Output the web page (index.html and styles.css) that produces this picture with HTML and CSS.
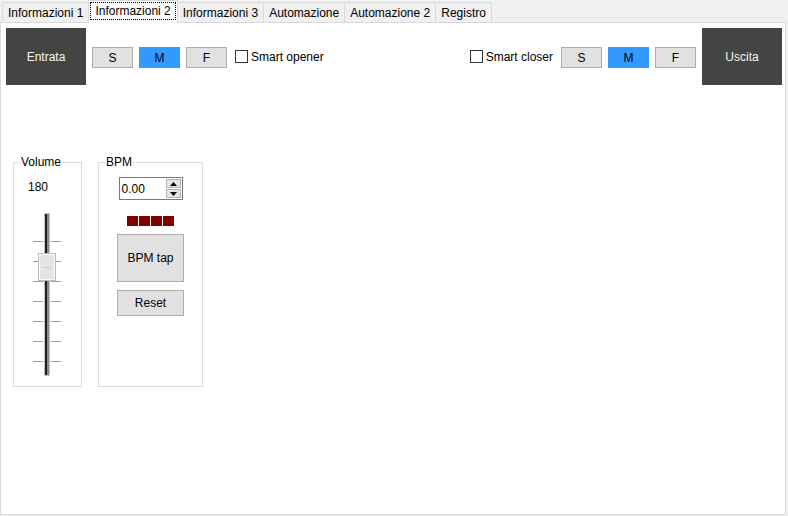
FILE: index.html
```html
<!DOCTYPE html>
<html lang="it">
<head>
<meta charset="utf-8">
<title>Informazioni 2</title>
<link rel="stylesheet" href="styles.css">
</head>
<body>
<div class="window">
  <div class="tabs">
    <div class="tab">Informazioni 1</div>
    <div class="tab selected"><span class="focus">Informazioni 2</span></div>
    <div class="tab">Informazioni 3</div>
    <div class="tab">Automazione</div>
    <div class="tab">Automazione 2</div>
    <div class="tab">Registro</div>
  </div>
  <div class="panel">
    <div class="toprow">
      <div class="bigbtn">Entrata</div>
      <div class="speed left">
        <div class="btn">S</div>
        <div class="btn on">M</div>
        <div class="btn">F</div>
      </div>
      <div class="check"><span class="box"></span>Smart opener</div>
      <div class="rightgroup">
        <div class="check"><span class="box"></span>Smart closer</div>
        <div class="speed right">
          <div class="btn">S</div>
          <div class="btn on">M</div>
          <div class="btn">F</div>
        </div>
        <div class="bigbtn">Uscita</div>
      </div>
    </div>
    <div class="groups">
      <fieldset class="group volume">
        <legend>Volume</legend>
        <div class="value">180</div>
        <svg class="slider" width="30" height="165" viewBox="0 0 30 165">
          <g stroke="#a0a0a0" stroke-width="1">
            <path d="M1 29.5H11M19 29.5H29"/>
            <path d="M1 49.5H11M19 49.5H29"/>
            <path d="M1 69.5H11M19 69.5H29"/>
            <path d="M1 89.5H11M19 89.5H29"/>
            <path d="M1 109.5H11M19 109.5H29"/>
            <path d="M1 129.5H11M19 129.5H29"/>
            <path d="M1 149.5H11M19 149.5H29"/>
          </g>
          <rect x="12.5" y="1.5" width="5" height="162" fill="#f0f0f0" stroke="#c4c4c4"/>
          <rect x="13" y="2" width="2" height="161" fill="#1e1e1e"/>
          <rect x="15" y="2" width="2" height="161" fill="#8a8a8a"/>
          <rect x="6.5" y="41.5" width="17" height="27" fill="#e5e5e5" stroke="#bcbcbc"/>
          <rect x="7.5" y="42.5" width="15" height="25" fill="none" stroke="#fafafa"/>
          <path d="M11 55.5H19" stroke="#c8c8c8"/>
        </svg>
      </fieldset>
      <fieldset class="group bpm">
        <legend>BPM</legend>
        <div class="spin">
          <span>0.00</span>
          <span class="arrows">
            <span class="arrow"><svg width="7" height="4" viewBox="0 0 7 4"><path d="M3.5 0L7 4H0Z" fill="#000"/></svg></span>
            <span class="arrow"><svg width="7" height="4" viewBox="0 0 7 4"><path d="M0 0H7L3.5 4Z" fill="#000"/></svg></span>
          </span>
        </div>
        <div class="leds">
          <span class="led"></span><span class="led"></span><span class="led"></span><span class="led"></span>
        </div>
        <div class="btn tap">BPM tap</div>
        <div class="btn reset">Reset</div>
      </fieldset>
    </div>
  </div>
</div>
</body>
</html>
```
FILE: styles.css
```css
* { box-sizing: border-box; }

body {
  margin: 0;
  font: 12px "Liberation Sans", Arial, sans-serif;
  color: #000;
  background: #f0f0f0;
}

.window {
  width: 788px;
  height: 516px;
  display: flex;
  flex-direction: column;
}

.tabs {
  display: flex;
  align-items: flex-end;
  height: 22px;
  padding-left: 2px;
  position: relative;
  z-index: 1;
}

.tab {
  height: 20px;
  padding: 0 5px;
  border: 1px solid #d9d9d9;
  border-bottom: none;
  margin-right: -1px;
  line-height: 20px;
  background: #f0f0f0;
  white-space: nowrap;
}

.tab.selected {
  height: 23px;
  margin-bottom: -1px;
  background: #fff;
  padding: 1px 1px 0;
  line-height: 16px;
}

.focus {
  display: block;
  border: 1px dotted #000;
  padding: 0 4px;
  line-height: 16px;
}

.panel {
  width: 786px;
  height: 493px;
  background: #fff;
  border: 1px solid #d9d9d9;
  padding: 5px 3px 0 5px;
}

.toprow {
  display: flex;
  align-items: center;
  height: 57px;
}

.bigbtn {
  width: 80px;
  height: 57px;
  background: #444444;
  color: #f4f4f4;
  display: flex;
  align-items: center;
  justify-content: center;
}

.speed {
  display: flex;
  gap: 6px;
  margin-top: 2px;
}

.speed.left { margin-left: 6px; margin-right: 8px; }
.speed.right { margin-left: 8px; margin-right: 6px; }

.btn {
  width: 41px;
  height: 21px;
  background: #e1e1e1;
  border: 1px solid #adadad;
  display: flex;
  align-items: center;
  justify-content: center;
}

.btn.on {
  background: #3399ff;
  border-color: #3399ff;
}

.check {
  display: flex;
  align-items: center;
  gap: 3px;
  white-space: nowrap;
}

.box {
  width: 13px;
  height: 13px;
  border: 1px solid #333;
  background: #fff;
}

.rightgroup {
  margin-left: auto;
  display: flex;
  align-items: center;
}

.groups {
  display: flex;
  gap: 16px;
  margin: 69px 0 0 7px;
  align-items: stretch;
}

.group {
  margin: 0;
  padding: 0;
  border: 1px solid #dcdcdc;
  min-width: 0;
}

.group legend {
  padding: 0 1px;
  margin-left: 6px;
  line-height: 16px;
}

.volume { width: 69px; }

.value {
  margin: 10px 0 0 14px;
  line-height: 15px;
}

.slider {
  display: block;
  margin: 17px 0 9px 18px;
}

.bpm {
  width: 105px;
  display: flex;
  flex-direction: column;
  align-items: center;
}

.spin {
  margin-top: 7px;
  width: 64px;
  height: 23px;
  border: 1px solid #7a7a7a;
  display: flex;
  align-items: center;
  justify-content: space-between;
  padding: 0 1px 0 2px;
}

.arrows {
  display: flex;
  flex-direction: column;
  gap: 1px;
}

.arrow {
  width: 15px;
  height: 9px;
  background: #e5e5e5;
  border: 1px solid #b4b4b4;
  display: flex;
  align-items: center;
  justify-content: center;
}

.arrow svg { display: block; }

.leds {
  margin-top: 16px;
  display: flex;
  gap: 1px;
}

.led {
  width: 11px;
  height: 10px;
  background: #800000;
}

.btn.tap {
  margin-top: 8px;
  width: 67px;
  height: 48px;
}

.btn.reset {
  margin-top: 8px;
  width: 67px;
  height: 26px;
}
```
